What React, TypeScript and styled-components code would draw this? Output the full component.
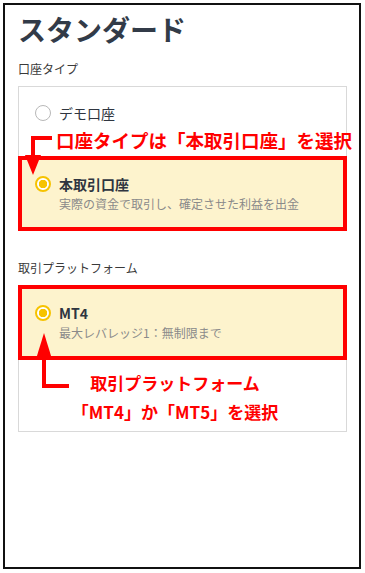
import React from "react"
import styled, { createGlobalStyle } from "styled-components"

const GlobalStyle = createGlobalStyle`
    body {
        margin: 0;
        background: #fff;
        font-family: "Noto Sans CJK JP", "Noto Sans", sans-serif;
    }
`

const ArrowDown = () => (
    <ArrowSvg width="40" height="100" viewBox="0 0 40 100" style={{ left: 0, top: 0 }}>
        <path d="M12 49 H33 V53 H16 V70 H12 Z" fill="#ff0000" />
        <path d="M6 68 H22 L14 88 Z" fill="#ff0000" />
    </ArrowSvg>
)

const ArrowUp = () => (
    <ArrowSvg width="60" height="110" viewBox="0 0 60 110" style={{ left: 0, top: 0 }}>
        <path d="M17 73 H33 L25 47 Z" fill="#ff0000" />
        <path d="M23 71 H27 V98 H50 V102 H23 Z" fill="#ff0000" />
    </ArrowSvg>
)

const App = () => {
    return (
        <>
            <GlobalStyle />
            <Frame>
                <Title>スタンダード</Title>

                <Section>
                    <Label>口座タイプ</Label>
                    <Box>
                        <Option>
                            <RadioWrap>
                                <Radio />
                            </RadioWrap>
                            <TextCol>
                                <OptTitle>デモ口座</OptTitle>
                            </TextCol>
                        </Option>
                        <Note>口座タイプは「本取引口座」を選択</Note>
                        <Option $marked $edge="bottom">
                            <RadioWrap>
                                <Radio $checked />
                            </RadioWrap>
                            <TextCol>
                                <OptTitle $bold>本取引口座</OptTitle>
                                <OptDesc>実際の資金で取引し、確定させた利益を出金</OptDesc>
                            </TextCol>
                        </Option>
                        <ArrowDown />
                    </Box>
                </Section>

                <Section>
                    <Label>取引プラットフォーム</Label>
                    <Box>
                        <Option $marked $edge="top">
                            <RadioWrap>
                                <Radio $checked />
                            </RadioWrap>
                            <TextCol>
                                <OptTitle $bold>MT4</OptTitle>
                                <OptDesc>最大レバレッジ1：無制限まで</OptDesc>
                            </TextCol>
                        </Option>
                        <NoteBlock>
                            取引プラットフォーム
                            <br />
                            「MT4」か「MT5」を選択
                        </NoteBlock>
                        <ArrowUp />
                    </Box>
                </Section>
            </Frame>
        </>
    )
}

export default App

const Frame = styled.div`
    box-sizing: border-box;
    width: 358px;
    height: 566px;
    margin: 3px;
    border: 2px solid #111;
    padding: 7px 12px 0 13px;
`
const Title = styled.h1`
    margin: 0 0 14px;
    font-size: 28px;
    line-height: 34px;
    font-weight: 700;
    color: #323b48;
    letter-spacing: 0;
`
const Section = styled.div`
    & + & {
        margin-top: 28px;
    }
`
const Label = styled.div`
    margin-bottom: 8px;
    font-size: 12px;
    line-height: 18px;
    color: #3a3a3a;
`
const Box = styled.div`
    position: relative;
    width: 329px;
    box-sizing: border-box;
    border: 1px solid #d9d9d9;
`
const Option = styled.div<{ $marked?: boolean; $edge?: "top" | "bottom" }>`
    position: relative;
    display: flex;
    align-items: flex-start;
    gap: 8px;
    padding: ${(p) => (p.$marked ? "14px 12px 14px 13px" : "16px 16px 0 16px")};
    background: ${(p) => (p.$marked ? "#fdf3cd" : "transparent")};
    border: ${(p) => (p.$marked ? "4px solid #ff0000" : "none")};
    margin: ${(p) =>
        p.$edge === "bottom" ? "0 -1px -1px -1px" : p.$edge === "top" ? "-1px -1px 0 -1px" : "0"};
`
const RadioWrap = styled.div`
    height: 20px;
    display: flex;
    align-items: center;
    flex-shrink: 0;
`
const Radio = styled.span<{ $checked?: boolean }>`
    box-sizing: border-box;
    width: 16px;
    height: 16px;
    border-radius: 50%;
    border: ${(p) => (p.$checked ? "2px solid #f6c300" : "1px solid #b8b8b8")};
    background: ${(p) =>
        p.$checked ? "radial-gradient(circle, #f6c300 0 4px, #fff 4.5px)" : "#fff"};
`
const TextCol = styled.div`
    display: flex;
    flex-direction: column;
    gap: 1px;
`
const OptTitle = styled.div<{ $bold?: boolean }>`
    font-size: 14px;
    line-height: 20px;
    font-weight: ${(p) => (p.$bold ? 700 : 400)};
    color: #2f3540;
`
const OptDesc = styled.div`
    font-size: 12px;
    line-height: 18px;
    color: #8a8a8a;
`
const Note = styled.div`
    margin: 6px 0 5px;
    padding-left: 37px;
    font-size: 18.5px;
    line-height: 22px;
    font-weight: 700;
    color: #ff0000;
    white-space: nowrap;
`
const NoteBlock = styled.div`
    padding: 8px 15px 5px 0;
    text-align: center;
    font-size: 17px;
    line-height: 29px;
    font-weight: 700;
    color: #ff0000;
    white-space: nowrap;
`
const ArrowSvg = styled.svg`
    position: absolute;
    z-index: 2;
    pointer-events: none;
`
